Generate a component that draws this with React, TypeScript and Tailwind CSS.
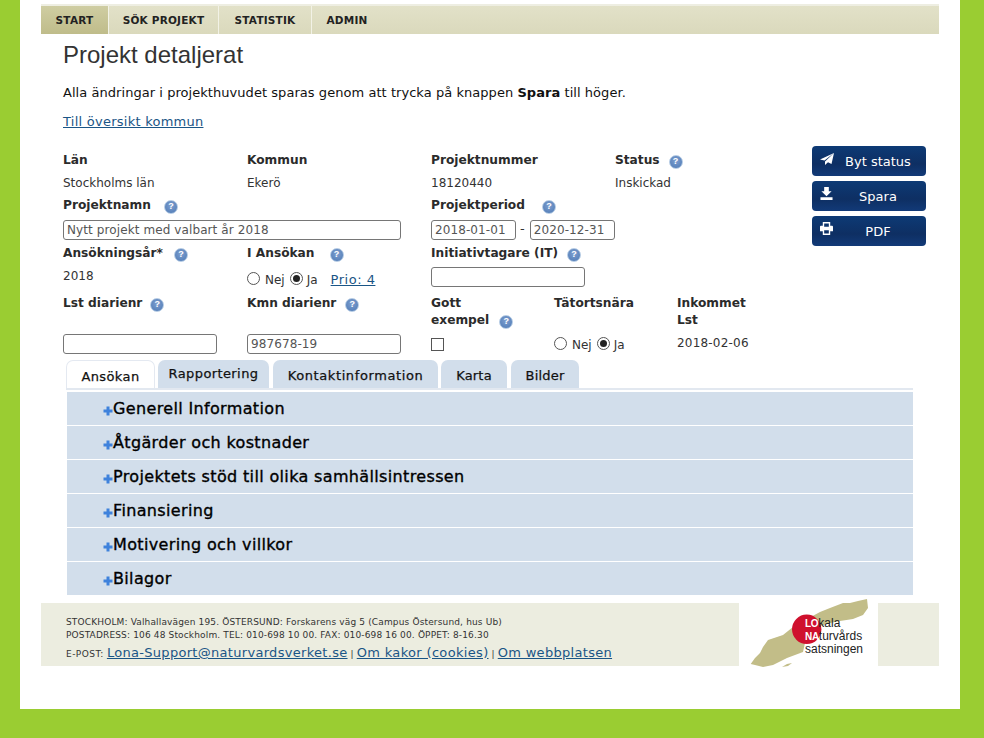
import React from "react";

const Help = () => (
  <span className="inline-flex w-[14px] h-[14px] rounded-full items-center justify-center text-white text-[9px] font-bold leading-none border border-[#b5cbe4] bg-[radial-gradient(circle_at_50%_40%,#7f9fcf,#4b78b4)] font-['Liberation_Sans',sans-serif]">?</span>
);

const Label = ({ children, gap }: { children: React.ReactNode; gap?: string }) => (
  <div className="font-bold text-[12.2px] leading-[17px] text-[#2b2b2b] whitespace-nowrap">
    {children}
    {gap && <span className={`${gap} inline-block h-[14px] -my-[2px] align-[0px]`}><Help /></span>}
  </div>
);

const Input = ({ w, value = "" }: { w: string; value?: string }) => (
  <div className={`${w} h-[20px] border border-[#767676] rounded-[3px] bg-white px-[3px] text-[12px] leading-[18px] text-[#555] tracking-[0.1px] overflow-hidden whitespace-nowrap`}>{value}</div>
);

const Radio = ({ on }: { on?: boolean }) => (
  <span className="inline-flex w-[13px] h-[13px] rounded-full border border-[#555] items-center justify-center bg-white">
    {on && <span className="w-[7px] h-[7px] rounded-full bg-[#222]" />}
  </span>
);

const NejJa = () => (
  <div className="flex items-center text-[12px] leading-[16px] text-[#333]">
    <Radio /><span className="ml-[5px] mt-[3px]">Nej</span><span className="ml-[5px] flex"><Radio on /></span><span className="ml-[4px] mt-[3px]">Ja</span>
  </div>
);

const Send = () => (
  <svg width="14" height="12" viewBox="0 0 14 12" className="fill-white"><path d="M14 0 L0 6.5 L4.5 7.5 Z M14 0 L5 8.5 L5 12 L8 9.2 L11.5 11 Z" /></svg>
);
const Save = () => (
  <svg width="13" height="13" viewBox="0 0 13 14" className="fill-white"><path d="M4 0H9V4.5H12L6.5 10L1 4.5H4Z M0 11H13V14H0Z" /></svg>
);
const Print = () => (
  <svg width="13" height="13" viewBox="0 0 14 14" className="fill-white"><path fillRule="evenodd" d="M3 0H11V4H13A1 1 0 0 1 14 5V10H11V14H3V10H0V5A1 1 0 0 1 1 4H3ZM4.5 1.5V5H9.5V1.5ZM4.5 9V12.5H9.5V9Z" /></svg>
);

const Btn = ({ icon, label, top }: { icon: React.ReactNode; label: string; top: string }) => (
  <div className="relative h-[30px] w-[114px] rounded-[4px] bg-[linear-gradient(#0d3a75,#0e2f63_60%,#123a78)] text-white text-[13px] leading-[31px]">
    <span className={`absolute left-[8px] ${top} flex`}>{icon}</span>
    <span className="block text-center pl-[18px]">{label}</span>
  </div>
);

const Tab = ({ children, active, w, up, track }: { children: React.ReactNode; active?: boolean; w: string; up?: boolean; track: string }) => (
  <div className={`${w} ${track} h-[28px] rounded-t-[7px] text-center text-[13px] font-medium text-[#111] [-webkit-text-stroke:0.25px_#111] ${up ? "leading-[27px]" : "leading-[31px]"} ${active ? "bg-white border-t border-l border-r border-[#e4e9f1]" : "bg-[#d2deeb]"}`}>{children}</div>
);

const Acc = ({ children }: { children: React.ReactNode }) => (
  <div className="h-[33px] bg-[#d2deeb] flex items-center pl-[36px] text-[16px] text-black tracking-[0.35px] [-webkit-text-stroke:0.35px_#000]">
    <svg width="10" height="10" viewBox="0 0 10 10" className="fill-[#3f82dc] mt-[4px] shrink-0"><path d="M3.5 0.5H6.5V3.5H9.5V6.5H6.5V9.5H3.5V6.5H0.5V3.5H3.5Z" /></svg>
    <span className="mt-[1px]">{children}</span>
  </div>
);

const linkCls = "text-[#1a5586] underline";

export default function App() {
  return (
    <div className="w-[984px] h-[738px] bg-[#9acd32] px-[20px] pb-[29px] font-['DejaVu_Sans',Verdana,sans-serif]">
      <div className="w-[940px] h-[709px] bg-white pl-[21px] pr-[21px] pt-[4px]">
        {/* nav */}
        <div className="h-[30px] border-t-[2px] border-[#eeeee2] bg-[linear-gradient(#e2e1c8,#dad9bc)] flex text-[10.5px] font-bold tracking-[0.2px] text-[#222] leading-[28px]">
          <div className="w-[67px] text-center bg-[linear-gradient(#cfcda2,#bfbc8a)]">START</div>
          <div className="w-[110px] text-center border-l-[1px] border-[#f2f2e6]">SÖK PROJEKT</div>
          <div className="w-[93px] text-center border-l-[1px] border-[#f2f2e6]">STATISTIK</div>
          <div className="w-[71px] text-center border-l-[1px] border-[#f2f2e6]">ADMIN</div>
        </div>

        <div className="pl-[22px] pr-[13px]">
          <h1 className="font-['Liberation_Sans',Arial,sans-serif] text-[24px] leading-[29px] text-[#333] mt-[6px]">Projekt detaljerat</h1>
          <p className="text-[13px] leading-[16px] text-[#111] mt-[16px] tracking-[0.05px]">Alla ändringar i projekthuvudet sparas genom att trycka på knappen <b>Spara</b> till höger.</p>
          <p className="text-[13px] leading-[16px] mt-[13px] tracking-[0.25px]"><span className={linkCls}>Till översikt kommun</span></p>

          <div className="flex mt-[21px]">
            <div className="w-[749px] shrink-0 text-[12px] text-[#333]">
              <div className="flex h-[45px] mt-[1px]">
                <div className="w-[184px]"><Label>Län</Label><div className="mt-[6px] leading-[16px]">Stockholms län</div></div>
                <div className="w-[184px]"><Label>Kommun</Label><div className="mt-[6px] leading-[16px]">Ekerö</div></div>
                <div className="w-[184px]"><Label>Projektnummer</Label><div className="mt-[6px] leading-[16px]">18120440</div></div>
                <div className="w-[184px]"><Label gap="ml-[9px]">Status</Label><div className="mt-[6px] leading-[16px]">Inskickad</div></div>
              </div>
              <div className="flex h-[48px]">
                <div className="w-[368px]"><Label gap="ml-[13px]">Projektnamn</Label><div className="mt-[6px]"><Input w="w-[338px]" value="Nytt projekt med valbart år 2018" /></div></div>
                <div className="w-[368px]">
                  <Label gap="ml-[17px]">Projektperiod</Label>
                  <div className="mt-[6px] flex items-center"><Input w="w-[85px]" value="2018-01-01" /><span className="ml-[4px] mr-[5px] -mt-[2px] text-[13px]">-</span><Input w="w-[85px]" value="2020-12-31" /></div>
                </div>
              </div>
              <div className="flex h-[50px]">
                <div className="w-[184px]"><Label gap="ml-[11px]">Ansökningsår*</Label><div className="mt-[6px] leading-[16px]">2018</div></div>
                <div className="w-[184px]">
                  <Label gap="ml-[15px]">I Ansökan</Label>
                  <div className="mt-[6px] flex items-center"><NejJa /><span className={`ml-[13px] mt-[4px] text-[13px] leading-[16px] tracking-[0.5px] ${linkCls}`}>Prio: 4</span></div>
                </div>
                <div className="w-[368px]">
                  <Label gap="ml-[9px]">Initiativtagare (IT)</Label>
                  <div className="mt-[5px]"><Input w="w-[154px]" /></div>
                </div>
              </div>
              <div className="flex h-[62px]">
                <div className="w-[184px]"><Label gap="ml-[8px]">Lst diarienr</Label><div className="mt-[22px]"><Input w="w-[154px]" /></div></div>
                <div className="w-[184px]"><Label gap="ml-[9px]">Kmn diarienr</Label><div className="mt-[22px]"><Input w="w-[154px]" value="987678-19" /></div></div>
                <div className="w-[123px]">
                  <Label gap="ml-[10px]">Gott<br />exempel</Label>
                  <div className="mt-[9px] w-[13px] h-[13px] border border-[#555] bg-white" />
                </div>
                <div className="w-[123px]"><Label>Tätortsnära</Label><div className="mt-[22px]"><NejJa /></div></div>
                <div className="w-[100px]"><Label>Inkommet<br />Lst</Label><div className="mt-[6px] leading-[16px] tracking-[0.2px]">2018-02-06</div></div>
              </div>
            </div>
            <div className="w-[114px] flex flex-col gap-[5px] -mt-[5px]">
              <Btn icon={<Send />} label="Byt status" top="top-[7px]" />
              <Btn icon={<Save />} label="Spara" top="top-[6px]" />
              <Btn icon={<Print />} label="PDF" top="top-[6px]" />
            </div>
          </div>

          <div className="ml-[3px] mt-[3px] w-[847px] border-b-[2px] border-[#e2e8f0] flex h-[30px]">
            <Tab active w="w-[89px]" track="tracking-[0.4px]">Ansökan</Tab>
            <div className="w-[3px]" />
            <Tab up w="w-[111px]" track="tracking-[0.4px]">Rapportering</Tab>
            <div className="w-[4px]" />
            <Tab w="w-[165px]" track="tracking-[0.6px]">Kontaktinformation</Tab>
            <div className="w-[3px]" />
            <Tab w="w-[66px]" track="tracking-[0.2px]">Karta</Tab>
            <div className="w-[4px]" />
            <Tab w="w-[68px]" track="tracking-[0.2px]">Bilder</Tab>
          </div>
          <div className="ml-[4px] w-[846px] mt-[2px] flex flex-col gap-[1px]">
            <Acc>Generell Information</Acc>
            <Acc>Åtgärder och kostnader</Acc>
            <Acc>Projektets stöd till olika samhällsintressen</Acc>
            <Acc>Finansiering</Acc>
            <Acc>Motivering och villkor</Acc>
            <Acc>Bilagor</Acc>
          </div>
        </div>

        {/* footer */}
        <div className="flex h-[63px] mt-[8px]">
          <div className="w-[698px] bg-[#ecede0] pl-[25px] pt-[13px] text-[#333] tracking-[0.15px]">
            <div className="text-[9px] leading-[13px] whitespace-nowrap">STOCKHOLM: Valhallavägen 195. ÖSTERSUND: Forskarens väg 5 (Campus Östersund, hus Ub)</div>
            <div className="text-[9px] leading-[13px] whitespace-nowrap">POSTADRESS: 106 48 Stockholm. TEL: 010-698 10 00. FAX: 010-698 16 00. ÖPPET: 8-16.30</div>
            <div className="text-[9px] leading-[17px] whitespace-nowrap mt-[2px]"><span className="tracking-[0.45px]">E-POST:</span> <span className={`text-[13px] tracking-[0.3px] ${linkCls}`}>Lona-Support@naturvardsverket.se</span><span className="mx-[3px]">|</span><span className={`text-[13px] tracking-[0.33px] ${linkCls}`}>Om kakor (cookies)</span><span className="mx-[3px]">|</span><span className={`text-[13px] tracking-[0.3px] ${linkCls}`}>Om webbplatsen</span></div>
          </div>
          <div className="relative w-[139px] bg-white">
            <svg width="125" height="74" viewBox="0 0 125 74" className="absolute left-[9px] -top-[7px]">
              <path d="M2.7 68 L7 62 L12 57 L15 51 L20 44 L35 39 L45 31 L59 23 L72 16 L82 12 L95 7 L102 7 L110 5 L119 3 L120 12 L115 19 L105 23 L92 25 L82 27 L69 31 L57 47 L55 56 L39 62 L25 69 L15 71 L7 69 Z" fill="#c2bd88" />
              <path d="M34 71 L39 68 L44 67 L40 70 Z" fill="#c2bd88" />
              <circle cx="58.7" cy="33.3" r="14.7" fill="#cf102d" />
            </svg>
            <div className="absolute left-[66px] top-[14px] text-[12px] leading-[12px] font-['Liberation_Sans',sans-serif] text-[#222] whitespace-nowrap">
              <div><span className="text-white font-bold text-[10px] tracking-[-0.3px]">LO</span>kala</div>
              <div><span className="text-white font-bold text-[10px] tracking-[-0.3px]">NA</span>turvårds</div>
              <div>satsningen</div>
            </div>
          </div>
          <div className="w-[61px] bg-[#ecede0]" />
        </div>
      </div>
    </div>
  );
}
